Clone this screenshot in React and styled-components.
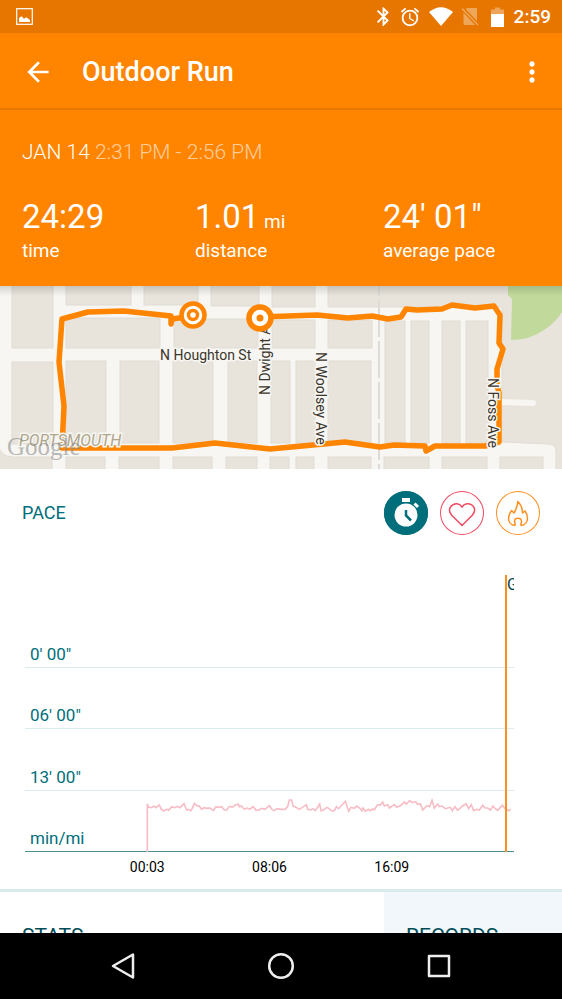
import React, { useState } from 'react'
import styled, { createGlobalStyle } from 'styled-components'
import { MdAlarm, MdArrowBack, MdBluetooth, MdMoreVert } from 'react-icons/md'

const stats = [
    { value: "24:29", label: "time" },
    { value: "1.01", unit: "mi", label: "distance" },
    { value: "24' 01\"", label: "average pace" },
];

const paceLevels = ["0' 00\"", "06' 00\"", "13' 00\"", "min/mi"];
const paceTimes = ["00:03", "08:06", "16:09"];

// city blocks as x, y, width, height
const blocks = [
    [12, -2, 41, 64], [66, -2, 65, 21], [144, -2, 54, 21], [211, -2, 48, 22], [272, -2, 43, 23],
    [66, 32, 94, 30], [174, 33, 84, 29], [272, 34, 43, 28], [328, 34, 44, 28],
    [12, 76, 41, 82], [66, 75, 40, 82], [120, 75, 39, 82], [173, 75, 40, 82], [228, 75, 29, 82],
    [271, 75, 19, 82], [296, 75, 19, 82], [328, 75, 43, 82],
    [385, 35, 20, 122], [411, 35, 18, 122], [442, 35, 18, 122], [466, 35, 22, 122],
    [66, 171, 39, 16], [119, 171, 40, 16], [173, 171, 39, 16], [226, 171, 31, 16], [270, 171, 19, 16],
    [296, 171, 18, 16], [328, 171, 43, 16], [384, 171, 45, 16], [442, 171, 45, 16], [500, 171, 43, 16],
];

const routePoints = "193,29 179,32 172,33 171,38 171,30 124,25 88,26 62,33 59,76 64,120 62,162 172,162 215,157 270,163 345,156 380,161 394,159 425,160 426,165 435,160 485,160 499,156 499,107 497,99 497,83 503,63 499,57 500,29 494,20 475,22 452,19 442,23 417,24 406,23 401,31 388,33 372,30 348,32 317,29 260,31";

const pacePoints = "367,831 367,686 370,696 380,698 387,693 393,698 403,690 408,701 415,708 425,703 431,706 440,695 449,698 457,694 465,698 477,686 485,705 491,703 497,707 502,700 508,685 515,692 523,693 530,703 537,698 545,700 555,699 565,707 573,695 580,697 590,695 598,705 605,705 613,694 622,697 630,691 640,688 643,695 649,693 658,703 665,699 675,702 685,695 693,706 703,705 710,700 720,703 733,692 741,703 747,707 757,701 768,703 780,703 788,695 793,675 800,675 804,693 813,697 823,703 832,697 844,689 848,703 858,705 863,701 871,707 880,693 884,687 888,707 896,705 905,697 911,700 921,708 928,707 934,695 941,701 961,679 971,709 978,697 988,700 995,693 1004,699 1011,707 1014,699 1021,709 1030,703 1036,707 1043,702 1048,704 1058,689 1065,691 1073,681 1078,693 1088,689 1093,699 1108,689 1115,697 1128,691 1138,681 1144,687 1154,677 1161,683 1172,680 1178,688 1186,686 1193,705 1206,692 1214,695 1221,676 1228,699 1238,687 1243,695 1251,693 1261,701 1276,697 1282,707 1290,695 1298,706 1313,693 1323,686 1331,701 1339,689 1346,707 1354,703 1363,705 1373,691 1380,699 1388,699 1396,705 1404,693 1411,701 1418,706 1432,691 1440,701 1451,707 1458,703";

function StatusBar() {
    return (
        <StatusRow>
            <svg width="17" height="17" viewBox="0 0 17 17">
                <rect x="0.7" y="0.7" width="15.6" height="15.6" fill="none" stroke="#fff" strokeWidth="1.2" />
                <path d="M3 14V10.500Q4 8 6 8.500L8 11Q10 8.500 12 10.500L14 12V14Z" fill="#fff" />
            </svg>
            <StatusIcons>
                <BluetoothIcon viewBox="4 0 16 24" />
                <MdAlarm size={22} />
                <svg width="24" height="19" viewBox="0 0 24 19">
                    <path d="M0 5Q12 -4.500 24 5L12 19Z" fill="#fff" />
                </svg>
                <svg width="22" height="19" viewBox="0 0 22 19" opacity="0.35">
                    <path d="M6 1H15Q16 1 16 2V14L5 2.500Z M2.500 5.500L14 18H3.500Q2.500 18 2.500 17Z" fill="#fff" />
                    <path d="M1 1.500L17 18" stroke="#fff" strokeWidth="1.500" />
                </svg>
                <svg width="13" height="20" viewBox="0 0 13 20">
                    <path d="M0 7V2.500H4V0.500H9V2.500H13V7Z" fill="#fff" opacity="0.35" />
                    <rect y="7" width="13" height="13" fill="#fff" />
                </svg>
            </StatusIcons>
            <Clock>2:59</Clock>
        </StatusRow>
    )
}

function RouteMap() {
    return (
        <MapDrawing viewBox="0 0 562 183" preserveAspectRatio="xMidYMid slice">
            <defs>
                <linearGradient id="mapShade" x1="0" y1="0" x2="0" y2="1">
                    <stop offset="0" stopColor="#000" stopOpacity="0.14" />
                    <stop offset="1" stopColor="#000" stopOpacity="0" />
                </linearGradient>
            </defs>
            <rect width="562" height="183" fill="#f7f6f2" />
            <g fill="#e8e4dc" stroke="#e0dcd4">
                <path d="M328 -2H564V185H556V165Q556 158 548 158L502 156V21H328Z" />
                <path d="M-2 160Q2 171 12 171H52V187H-2Z" />
                {blocks.map(([x, y, width, height], index) => (
                    <rect key={index} x={x} y={y} width={width} height={height} />
                ))}
            </g>
            <path d="M508 0V9L512 13L511 54Q530 54 544 44Q555 37 562 26V0Z" fill="#c1da9b" />
            <path d="M499 116L533 117" stroke="#f7f6f2" strokeWidth="6" strokeLinecap="round" />
            <path d="M379 0V183" stroke="#dcdbd8" strokeWidth="2" strokeDasharray="37 4" strokeDashoffset="27" />
            <polyline points={routePoints} fill="none" stroke="#ff8400" strokeWidth="5.500" strokeLinejoin="round" />
            <StreetName x="160" y="74">N Houghton St</StreetName>
            <StreetName transform="translate(270 109) rotate(-90)">N Dwight Ave</StreetName>
            <StreetName transform="translate(316 66) rotate(90)">N Woolsey Ave</StreetName>
            <StreetName transform="translate(488 92) rotate(90)">N Foss Ave</StreetName>
            <AreaName x="19" y="160">PORTSMOUTH</AreaName>
            <MapBrand x="7" y="169">Google</MapBrand>
            <circle cx="193" cy="29" r="11.500" fill="#fff" stroke="#ff8400" strokeWidth="4.500" />
            <circle cx="193" cy="29" r="4.500" fill="#fff" stroke="#ff8400" strokeWidth="3.500" />
            <circle cx="260" cy="32" r="11" fill="#fff" stroke="#ff8400" strokeWidth="5.500" />
            <circle cx="260" cy="32" r="3.500" fill="#ff8400" />
            <rect width="562" height="10" fill="url(#mapShade)" />
        </MapDrawing>
    )
}

function MetricIcon({ name }) {
    if (name === "pace") {
        return (
            <svg width="44" height="44" viewBox="0 0 44 44">
                <rect x="18" y="7" width="8" height="4" fill="#fff" />
                <path d="M30.500 12.500L34 16" stroke="#fff" strokeWidth="3" />
                <circle cx="22" cy="24" r="11.500" fill="#fff" />
                <path d="M22 19V24.500L27 29.500" fill="none" stroke="#006e7b" strokeWidth="2.500" />
            </svg>
        )
    }
    if (name === "heart rate") {
        return (
            <svg width="44" height="44" viewBox="0 0 44 44" fill="none" stroke="#ee4b63" strokeWidth="1.500">
                <path d="M22 34.500L11.500 24Q8 19.500 10.500 16Q13 12.500 17 12.800Q20 13 22 16Q24 13 27 12.800Q31.500 12.500 33.700 16Q36 19.500 32.500 24Z" />
            </svg>
        )
    }
    return (
        <svg width="44" height="44" viewBox="0 0 44 44" fill="none" stroke="#ff8f1f" strokeWidth="1.500" strokeLinejoin="round">
            <path d="M18.500 34.500C15 34 12.500 31 12.500 27.500C12.500 23.500 14.500 21.500 15.500 19.500L18 22C19.500 19.500 21.500 16 21.800 10.500C25.500 14 26.500 18 26.500 22L29 20C31 22.500 31.500 25 31.500 27.500C31.500 31.500 28.500 34 25.500 34.500C24 34.500 25.500 32 25.500 30.500C25.500 28.500 24 27.300 22 27.300C20 27.300 18.500 28.500 18.500 30.500C18.500 32 20 34.500 18.500 34.500Z" />
        </svg>
    )
}

function PaceChart() {
    return (
        <Chart>
            <Plot>
                {paceLevels.map((level) => <Level key={level}>{level}</Level>)}
                <PlotLine viewBox="0 0 1467 831" preserveAspectRatio="none">
                    <polyline points={pacePoints} fill="none" stroke="#f7bcc4" strokeWidth="1.600" vectorEffect="non-scaling-stroke" />
                </PlotLine>
                <Cursor>G</Cursor>
            </Plot>
            <TimeAxis>
                {paceTimes.map((time) => <span key={time}>{time}</span>)}
            </TimeAxis>
        </Chart>
    )
}

function App() {
    const [metric, setMetric] = useState("pace");

    return (
        <Screen>
            <GlobalStyle />
            <StatusBar />
            <AppBar>
                <BarButton aria-label="Back"><MdArrowBack size={32} /></BarButton>
                <Title>Outdoor Run</Title>
                <BarButton aria-label="More options"><MdMoreVert size={32} /></BarButton>
            </AppBar>
            <Content>
                <Summary>
                    <DateLine>JAN 14 <time>2:31 PM - 2:56 PM</time></DateLine>
                    <StatGrid>
                        {stats.map((stat) => (
                            <div key={stat.label}>
                                <StatValue>{stat.value}{stat.unit ? <small> {stat.unit}</small> : ""}</StatValue>
                                <StatLabel>{stat.label}</StatLabel>
                            </div>
                        ))}
                    </StatGrid>
                </Summary>
                <RouteMap />
                <ChartHeader>
                    <ChartTitle>PACE</ChartTitle>
                    <MetricList>
                        <MetricButton aria-label="Pace" aria-pressed={metric === "pace"} $color="#006e7b" $filled onClick={() => setMetric("pace")}>
                            <MetricIcon name="pace" />
                        </MetricButton>
                        <MetricButton aria-label="Heart rate" aria-pressed={metric === "heart rate"} $color="#ee4b63" onClick={() => setMetric("heart rate")}>
                            <MetricIcon name="heart rate" />
                        </MetricButton>
                        <MetricButton aria-label="Calories" aria-pressed={metric === "calories"} $color="#ff8f1f" onClick={() => setMetric("calories")}>
                            <MetricIcon name="calories" />
                        </MetricButton>
                    </MetricList>
                </ChartHeader>
                <PaceChart />
                <Panels>
                    <Panel>STATS</Panel>
                    <Panel $tinted>RECORDS</Panel>
                </Panels>
            </Content>
            <NavBar>
                <NavButton aria-label="Back">
                    <svg width="28" height="28" viewBox="0 0 28 28"><path d="M4 14L24 2.500V25.500Z" /></svg>
                </NavButton>
                <NavButton aria-label="Home">
                    <svg width="28" height="28" viewBox="0 0 28 28"><circle cx="14" cy="14" r="11.800" /></svg>
                </NavButton>
                <NavButton aria-label="Recent apps">
                    <svg width="28" height="28" viewBox="0 0 28 28"><rect x="4" y="4" width="20" height="20" /></svg>
                </NavButton>
            </NavBar>
        </Screen>
    )
};

const GlobalStyle = createGlobalStyle`
    * {
        box-sizing: border-box;
    }

    body {
        margin: 0;
        font-family: Roboto, "Liberation Sans", sans-serif;
    }

    button {
        padding: 0;
        border: 0;
        background: none;
        color: inherit;
        cursor: pointer;
    }

    svg {
        display: block;
    }
`

const Screen = styled.div`
    display: flex;
    flex-direction: column;
    height: 100vh;
    background: #fff;
`

const StatusRow = styled.div`
    display: flex;
    flex: none;
    align-items: center;
    height: 33px;
    padding: 0 11px 0 16px;
    background: #e67600;
    color: #fff;
`

const StatusIcons = styled.div`
    display: flex;
    align-items: center;
    gap: 8px;
    margin-left: auto;
`

const BluetoothIcon = styled(MdBluetooth)`
    width: 15px;
    height: 23px;
`

const Clock = styled.span`
    margin-left: 10px;
    font-size: 19px;
    font-weight: 500;
    line-height: 24px;
`

const AppBar = styled.header`
    display: flex;
    flex: none;
    align-items: center;
    height: 77px;
    padding: 2px 14px 0 22px;
    border-bottom: 2px solid #e67800;
    background: #ff8400;
    color: #fff;
`

const BarButton = styled.button`
    width: 32px;
    height: 32px;
`

const Title = styled.h1`
    flex: 1;
    margin: 0 0 0 28px;
    font-size: 27px;
    font-weight: 500;
    line-height: 32px;
`

const Content = styled.main`
    flex: 1;
    min-height: 0;
    overflow: hidden;
`

const Summary = styled.section`
    padding: 28px 22px 21px;
    background: #ff8400;
    color: #fff;
`

const DateLine = styled.p`
    margin: 0;
    font-size: 21px;
    font-weight: 300;
    line-height: 28px;

    time {
        opacity: 0.6;
    }
`

const StatGrid = styled.div`
    display: grid;
    grid-template-columns: 173fr 188fr 157fr;
    margin-top: 31px;
`

const StatValue = styled.div`
    font-size: 33px;
    line-height: 40px;

    small {
        font-size: 19px;
        line-height: 20px;
    }
`

const StatLabel = styled.div`
    font-size: 19px;
    line-height: 28px;
`

const MapDrawing = styled.svg`
    width: 100%;
    height: 183px;
`

const StreetName = styled.text`
    fill: #3b352d;
    stroke: #f7f6f2;
    stroke-width: 3px;
    paint-order: stroke;
    font-size: 14px;
`

const AreaName = styled.text`
    fill: #b0a68e;
    stroke: #f7f6f2;
    stroke-width: 3px;
    paint-order: stroke;
    font-size: 16px;
    font-style: italic;
`

const MapBrand = styled.text`
    fill: #8c8c8c;
    fill-opacity: 0.6;
    font-family: "Liberation Serif", serif;
    font-size: 25px;
`

const ChartHeader = styled.div`
    display: flex;
    align-items: center;
    justify-content: space-between;
    padding: 22px 22px 0;
`

const ChartTitle = styled.h2`
    margin: 0;
    color: #006e7b;
    font-size: 18px;
    font-weight: 400;
    line-height: 24px;
`

const MetricList = styled.div`
    display: flex;
    gap: 12px;
`

const MetricButton = styled.button`
    width: 44px;
    height: 44px;
    border-radius: 50%;
    background: ${(props) => props.$filled ? props.$color : "transparent"};
    box-shadow: inset 0 0 0 1px ${(props) => props.$color};
`

const Chart = styled.section`
    padding: 40px 48px 12px 25px;
`

const Plot = styled.div`
    position: relative;
    display: flex;
    flex-direction: column;
    height: 277px;
    padding-top: 31px;
    overflow: hidden;
`

const Level = styled.div`
    display: flex;
    flex: 1;
    align-items: flex-end;
    padding: 0 5px 3px;
    border-bottom: 1px solid #d9ecee;
    color: #006e7b;
    font-size: 17px;
    line-height: 20px;

    &:nth-child(4) {
        border-color: #4c8f93;
    }
`

const PlotLine = styled.svg`
    position: absolute;
    inset: 0;
    width: 100%;
    height: 100%;
`

const Cursor = styled.div`
    position: absolute;
    top: 0;
    bottom: 0;
    right: 0;
    width: 9px;
    overflow: hidden;
    border-left: 2px solid #ff8f1f;
    color: #004650;
    font-size: 16px;
    line-height: 20px;
`

const TimeAxis = styled.div`
    display: grid;
    grid-template-columns: repeat(3, 1fr);
    padding: 5px 12.5% 0;
    font-size: 14px;
    line-height: 20px;
    text-align: center;
`

const Panels = styled.div`
    display: grid;
    grid-template-columns: 384fr 178fr;
    border-top: 3px solid #d8eaec;
`

const Panel = styled.h2`
    margin: 0;
    padding: 30px 22px;
    background: ${(props) => props.$tinted ? "#f1f7fa" : "#fff"};
    color: #004d58;
    font-size: 21px;
    font-weight: 400;
    line-height: 28px;
`

const NavBar = styled.nav`
    display: flex;
    flex: none;
    align-items: center;
    justify-content: center;
    gap: 130px;
    height: 66px;
    background: #000;
`

const NavButton = styled.button`
    svg {
        fill: none;
        stroke: #eee;
        stroke-width: 2.5px;
        stroke-linejoin: round;
    }
`

export default App;
